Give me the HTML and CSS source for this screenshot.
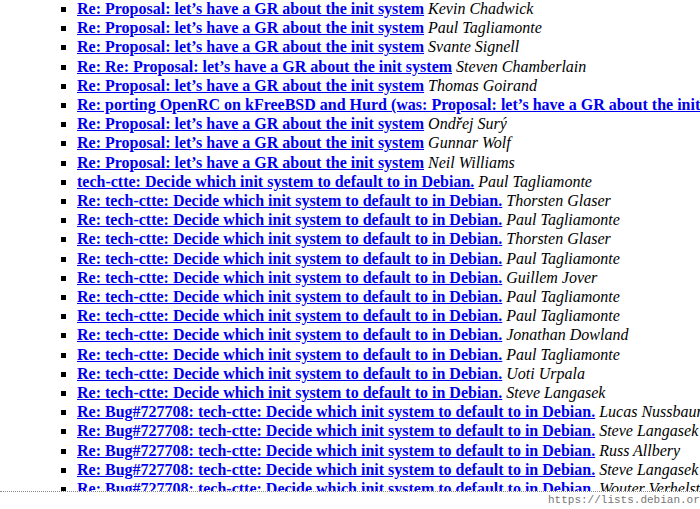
FILE: index.html
```html
<!DOCTYPE html>
<html>
<head>
<meta charset="utf-8">
<link rel="stylesheet" href="styles.css">
</head>
<body>
<ul class="thread">
<li><a href="#" class="subj">Re: Proposal: let’s have a GR about the init system</a> <em class="from">Kevin Chadwick</em></li>
<li><a href="#" class="subj">Re: Proposal: let’s have a GR about the init system</a> <em class="from">Paul Tagliamonte</em></li>
<li><a href="#" class="subj">Re: Proposal: let’s have a GR about the init system</a> <em class="from">Svante Signell</em></li>
<li><a href="#" class="subj">Re: Re: Proposal: let’s have a GR about the init system</a> <em class="from">Steven Chamberlain</em></li>
<li><a href="#" class="subj">Re: Proposal: let’s have a GR about the init system</a> <em class="from">Thomas Goirand</em></li>
<li><a href="#" class="subj">Re: porting OpenRC on kFreeBSD and Hurd (was: Proposal: let’s have a GR about the init system)</a> <em class="from">Svante Signell</em></li>
<li><a href="#" class="subj">Re: Proposal: let’s have a GR about the init system</a> <em class="from">Ondřej Surý</em></li>
<li><a href="#" class="subj">Re: Proposal: let’s have a GR about the init system</a> <em class="from">Gunnar Wolf</em></li>
<li><a href="#" class="subj">Re: Proposal: let’s have a GR about the init system</a> <em class="from">Neil Williams</em></li>
<li><a href="#" class="subj">tech-ctte: Decide which init system to default to in Debian.</a> <em class="from">Paul Tagliamonte</em></li>
<li><a href="#" class="subj">Re: tech-ctte: Decide which init system to default to in Debian.</a> <em class="from">Thorsten Glaser</em></li>
<li><a href="#" class="subj">Re: tech-ctte: Decide which init system to default to in Debian.</a> <em class="from">Paul Tagliamonte</em></li>
<li><a href="#" class="subj">Re: tech-ctte: Decide which init system to default to in Debian.</a> <em class="from">Thorsten Glaser</em></li>
<li><a href="#" class="subj">Re: tech-ctte: Decide which init system to default to in Debian.</a> <em class="from">Paul Tagliamonte</em></li>
<li><a href="#" class="subj">Re: tech-ctte: Decide which init system to default to in Debian.</a> <em class="from">Guillem Jover</em></li>
<li><a href="#" class="subj">Re: tech-ctte: Decide which init system to default to in Debian.</a> <em class="from">Paul Tagliamonte</em></li>
<li><a href="#" class="subj">Re: tech-ctte: Decide which init system to default to in Debian.</a> <em class="from">Paul Tagliamonte</em></li>
<li><a href="#" class="subj">Re: tech-ctte: Decide which init system to default to in Debian.</a> <em class="from">Jonathan Dowland</em></li>
<li><a href="#" class="subj">Re: tech-ctte: Decide which init system to default to in Debian.</a> <em class="from">Paul Tagliamonte</em></li>
<li><a href="#" class="subj">Re: tech-ctte: Decide which init system to default to in Debian.</a> <em class="from">Uoti Urpala</em></li>
<li><a href="#" class="subj">Re: tech-ctte: Decide which init system to default to in Debian.</a> <em class="from">Steve Langasek</em></li>
<li><a href="#" class="subj">Re: Bug#727708: tech-ctte: Decide which init system to default to in Debian.</a> <em class="from">Lucas Nussbaum</em></li>
<li><a href="#" class="subj">Re: Bug#727708: tech-ctte: Decide which init system to default to in Debian.</a> <em class="from">Steve Langasek</em></li>
<li><a href="#" class="subj">Re: Bug#727708: tech-ctte: Decide which init system to default to in Debian.</a> <em class="from">Russ Allbery</em></li>
<li><a href="#" class="subj">Re: Bug#727708: tech-ctte: Decide which init system to default to in Debian.</a> <em class="from">Steve Langasek</em></li>
<li><a href="#" class="subj">Re: Bug#727708: tech-ctte: Decide which init system to default to in Debian.</a> <em class="from">Wouter Verhelst</em></li>
<li><a href="#" class="subj">Re: Bug#727708: tech-ctte: Decide which init system to default to in Debian.</a> <em class="from">Ian Jackson</em></li>
</ul>
<div class="statusbar"><span class="url">https://lists.debian.org/debian-devel/2013/10/threads.html</span></div>
</body>
</html>
```
FILE: styles.css
```css
html, body {
  margin: 0;
  padding: 0;
  overflow: hidden;
  background: #fff;
}
body {
  font-family: "Liberation Serif", "Times New Roman", serif;
  font-size: 16px;
  color: #000;
}
.thread {
  list-style: square;
  margin: -1px 0 0 0;
  padding: 0 0 0 77px;
  line-height: 19.2px;
}
.thread li {
  white-space: nowrap;
}
.subj {
  color: #0000ee;
  font-weight: bold;
  text-decoration: underline;
}
.from {
  font-style: italic;
}
.statusbar {
  position: fixed;
  left: 0;
  right: 0;
  bottom: 0;
  height: 17px;
  background: #fff;
  border-top: 1px dotted #888;
  overflow: hidden;
  white-space: nowrap;
}
.url {
  display: block;
  padding-left: 548px;
  font-family: "Liberation Mono", "Courier New", monospace;
  font-size: 11px;
  line-height: 17px;
  color: #777;
}
```
